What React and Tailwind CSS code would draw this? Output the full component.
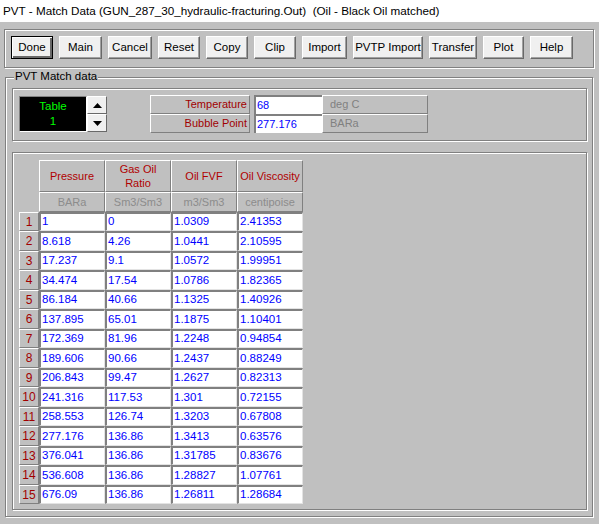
import React from 'react';

const raised = 'border border-t-white border-l-white border-r-[#808080] border-b-[#808080]';
const etched = 'border border-[#808080] shadow-[inset_1px_1px_0_#fff,1px_1px_0_#fff]';
const sunken = 'border-t-2 border-l-2 border-t-[#808080] border-l-[#808080] border-r border-b border-r-[#e3e3e3] border-b-[#e3e3e3]';

const buttons = [
    { label: 'Done', w: 'w-[42px]', primary: true },
    { label: 'Main', w: 'w-[43px]' },
    { label: 'Cancel', w: 'w-[44px]' },
    { label: 'Reset', w: 'w-[42px]' },
    { label: 'Copy', w: 'w-[42px]' },
    { label: 'Clip', w: 'w-[42px]' },
    { label: 'Import', w: 'w-[45px]' },
    { label: 'PVTP Import', w: 'w-[70px]' },
    { label: 'Transfer', w: 'w-[48px]' },
    { label: 'Plot', w: 'w-[41px]' },
    { label: 'Help', w: 'w-[43px]' },
];

const columns = [
    { title: ['Pressure'], unit: 'BARa' },
    { title: ['Gas Oil', 'Ratio'], unit: 'Sm3/Sm3' },
    { title: ['Oil FVF'], unit: 'm3/Sm3' },
    { title: ['Oil Viscosity'], unit: 'centipoise' },
];

const rows = [
    ['1', '0', '1.0309', '2.41353'],
    ['8.618', '4.26', '1.0441', '2.10595'],
    ['17.237', '9.1', '1.0572', '1.99951'],
    ['34.474', '17.54', '1.0786', '1.82365'],
    ['86.184', '40.66', '1.1325', '1.40926'],
    ['137.895', '65.01', '1.1875', '1.10401'],
    ['172.369', '81.96', '1.2248', '0.94854'],
    ['189.606', '90.66', '1.2437', '0.88249'],
    ['206.843', '99.47', '1.2627', '0.82313'],
    ['241.316', '117.53', '1.301', '0.72155'],
    ['258.553', '126.74', '1.3203', '0.67808'],
    ['277.176', '136.86', '1.3413', '0.63576'],
    ['376.041', '136.86', '1.31785', '0.83676'],
    ['536.608', '136.86', '1.28827', '1.07761'],
    ['676.09', '136.86', '1.26811', '1.28684'],
];

function ToolButton({ label, w, primary }) {
    return (
        <button
            className={`${w} h-[23px] flex items-center justify-center bg-[#f0f0f0] text-black text-[11.5px] ${primary
                ? 'border border-black shadow-[inset_1px_1px_0_#fff,inset_-2px_-2px_0_#696969]'
                : 'border border-t-white border-l-white border-r-[#696969] border-b-[#696969] shadow-[inset_-1px_-1px_0_#a0a0a0]'
                }`}
        >
            {label}
        </button>
    );
}

function SpinButton({ up }) {
    return (
        <button className="w-[20px] h-[18px] flex items-center justify-center bg-[#f0f0f0] border border-t-white border-l-white border-r-[#696969] border-b-[#696969]">
            <svg width="9" height="5" viewBox="0 0 9 5">
                {up ? <path d="M4.5 0L9 5H0z" fill="#000" /> : <path d="M0 0h9L4.5 5z" fill="#000" />}
            </svg>
        </button>
    );
}

export default function App() {
    return (
        <div className="w-[599px] h-[524px] overflow-hidden bg-[#c0c0c0] text-[11px] leading-none text-black" style={{ fontFamily: '"Liberation Sans", Arial, sans-serif' }}>
            {/* window caption */}
            <div className="h-[22px] bg-white pl-[3px] flex items-center text-[11.7px]">
                PVT - Match Data (GUN_287_30_hydraulic-fracturing.Out)&nbsp; (Oil - Black Oil matched)
            </div>

            <div className="pl-[4px] pt-[7px]">
                {/* toolbar */}
                <div className={`w-[590px] h-[39px] ${etched} flex items-start gap-[6px] pl-[6px] pt-[6px]`}>
                    {buttons.map(b => (
                        <ToolButton key={b.label} {...b} />
                    ))}
                </div>

                {/* group box */}
                <div className={`relative mt-[9px] ml-[1px] w-[588px] h-[440px] ${etched} pl-[6px] pt-[10px]`}>
                    <span className="absolute left-[8px] -top-[7px] bg-[#c0c0c0] px-[1px] text-[11.5px]">PVT Match data</span>

                    {/* table selector + temperature/bubble point */}
                    <div className={`w-[575px] h-[53px] ${etched} flex items-start pl-[6px] pt-[7px]`}>
                        <div className="w-[68px] h-[36px] bg-black border border-t-[#808080] border-l-[#808080] border-r-white border-b-white flex flex-col items-center justify-center gap-[3px] text-[#00ff00] text-[11.5px]">
                            <span>Table</span>
                            <span>1</span>
                        </div>
                        <div className="flex flex-col">
                            <SpinButton up />
                            <SpinButton />
                        </div>

                        <div className="ml-[43px] -mt-[1px] flex">
                            <div className="flex flex-col">
                                {['Temperature', 'Bubble Point'].map(l => (
                                    <div key={l} className={`w-[100px] h-[19px] ${raised} flex items-center justify-end pr-[2px] text-[#a00000]`}>{l}</div>
                                ))}
                            </div>
                            <div className="flex flex-col ml-[4px]">
                                {['68', '277.176'].map(v => (
                                    <div key={v} className="w-[68px] h-[19px] bg-white border-l-2 border-t-2 border-l-[#808080] border-t-[#808080] flex items-center pl-[1px] text-[#0000ff]">{v}</div>
                                ))}
                            </div>
                            <div className="flex flex-col">
                                {['deg C', 'BARa'].map(u => (
                                    <div key={u} className={`w-[106px] h-[19px] ${raised} flex items-center pl-[7px] text-[#808080]`}>{u}</div>
                                ))}
                            </div>
                        </div>
                    </div>

                    {/* data grid */}
                    <div className={`mt-[11px] w-[575px] h-[358px] ${etched} pl-[6px] pt-[7px]`}>
                        <div className="flex">
                            <div className="w-[20px]" />
                            {columns.map(c => (
                                <div key={c.unit} className="w-[66px] flex flex-col">
                                    <div className={`h-[32px] ${raised} flex flex-col items-center justify-center gap-[3px] text-[#b00000]`}>
                                        {c.title.map(t => <span key={t}>{t}</span>)}
                                    </div>
                                    <div className={`h-[20px] ${raised} flex items-center justify-center text-[#8c8c8c]`}>{c.unit}</div>
                                </div>
                            ))}
                        </div>
                        {rows.map((r, i) => (
                            <div key={i} className={`flex ${i % 2 ? 'h-[20px]' : 'h-[19px]'}`}>
                                <div className={`w-[20px] ${raised} flex items-center justify-center text-[#a00000] text-[12px]`}>{i + 1}</div>
                                {r.map((v, j) => (
                                    <div key={j} className={`w-[66px] bg-white ${sunken} flex items-center pl-[1px] text-[#0000ff] text-[11.5px]`}>{v}</div>
                                ))}
                            </div>
                        ))}
                    </div>
                </div>
            </div>
        </div>
    );
}
